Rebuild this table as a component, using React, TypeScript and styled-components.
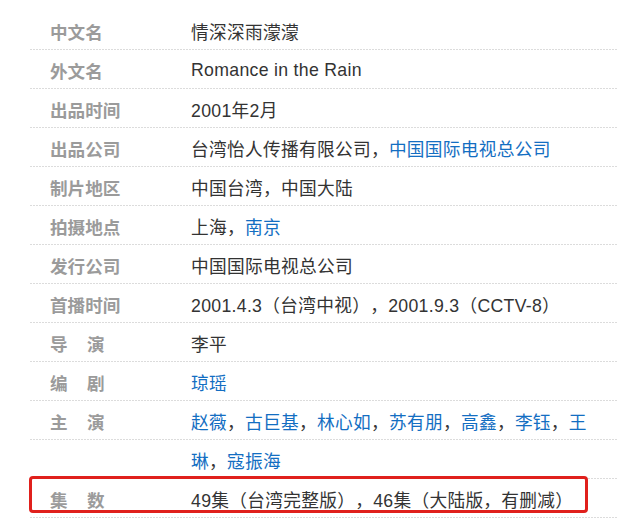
import React from 'react'
import styled, { createGlobalStyle } from 'styled-components'

type Part = { text: string; link?: boolean }
type Item = { label: string; spaced?: boolean; value: Part[]; marked?: boolean }

const items: Item[] = [
    { label: '中文名', value: [{ text: '情深深雨濛濛' }] },
    { label: '外文名', value: [{ text: 'Romance in the Rain' }] },
    { label: '出品时间', value: [{ text: '2001年2月' }] },
    {
        label: '出品公司',
        value: [{ text: '台湾怡人传播有限公司，' }, { text: '中国国际电视总公司', link: true }],
    },
    { label: '制片地区', value: [{ text: '中国台湾，中国大陆' }] },
    { label: '拍摄地点', value: [{ text: '上海，' }, { text: '南京', link: true }] },
    { label: '发行公司', value: [{ text: '中国国际电视总公司' }] },
    { label: '首播时间', value: [{ text: '2001.4.3（台湾中视），2001.9.3（CCTV-8）' }] },
    { label: '导演', spaced: true, value: [{ text: '李平' }] },
    { label: '编剧', spaced: true, value: [{ text: '琼瑶', link: true }] },
    {
        label: '主演',
        spaced: true,
        value: [
            { text: '赵薇', link: true },
            { text: '，' },
            { text: '古巨基', link: true },
            { text: '，' },
            { text: '林心如', link: true },
            { text: '，' },
            { text: '苏有朋', link: true },
            { text: '，' },
            { text: '高鑫', link: true },
            { text: '，' },
            { text: '李钰', link: true },
            { text: '，' },
            { text: '王', link: true },
        ],
    },
    {
        label: '',
        value: [{ text: '琳', link: true }, { text: '，' }, { text: '寇振海', link: true }],
    },
    {
        label: '集数',
        spaced: true,
        marked: true,
        value: [{ text: '49集（台湾完整版），46集（大陆版，有删减）' }],
    },
]

const App = () => {
    return (
        <>
            <GlobalStyle />
            <InfoList>
                {items.map((item, i) => (
                    <Row key={i}>
                        <Label $spaced={item.spaced}>{item.label}</Label>
                        <Value>
                            {item.value.map((part, j) =>
                                part.link ? (
                                    <ValueLink key={j} href="#">
                                        {part.text}
                                    </ValueLink>
                                ) : (
                                    <span key={j}>{part.text}</span>
                                ),
                            )}
                        </Value>
                        {item.marked && <Mark />}
                    </Row>
                ))}
            </InfoList>
        </>
    )
}

export default App

const GlobalStyle = createGlobalStyle`
    html, body {
        margin: 0;
        padding: 0;
        background: #fff;
    }
    body {
        font-family: 'Liberation Sans', 'Noto Sans CJK SC', sans-serif;
        text-spacing-trim: space-all;
        overflow: hidden;
    }
`

const InfoList = styled.div`
    padding: 11px 0 0 30px;
    display: flex;
    flex-direction: column;
`

const Row = styled.div`
    position: relative;
    display: flex;
    align-items: center;
    height: 36px;
    padding: 2px 0 1px;
    background-image: linear-gradient(to right, #dcdcdc 2px, transparent 2px);
    background-size: 3px 1px;
    background-repeat: repeat-x;
    background-position: left bottom;
`

const Label = styled.div<{ $spaced?: boolean }>`
    width: 141px;
    padding-left: 20px;
    flex-shrink: 0;
    font-size: 17.6px;
    font-weight: bold;
    color: #9b9b9b;
    white-space: nowrap;
    letter-spacing: ${(p) => (p.$spaced ? '19.5px' : '0')};
`

const Value = styled.div`
    font-size: 17.7px;
    letter-spacing: 0.3px;
    color: #333;
    white-space: nowrap;
`

const ValueLink = styled.a`
    color: #136ec2;
    text-decoration: none;
`

const Mark = styled.div`
    position: absolute;
    left: -1px;
    top: -3px;
    width: 559px;
    height: 37px;
    box-sizing: border-box;
    border: 3px solid #e0201c;
    border-radius: 4px;
    pointer-events: none;
`
